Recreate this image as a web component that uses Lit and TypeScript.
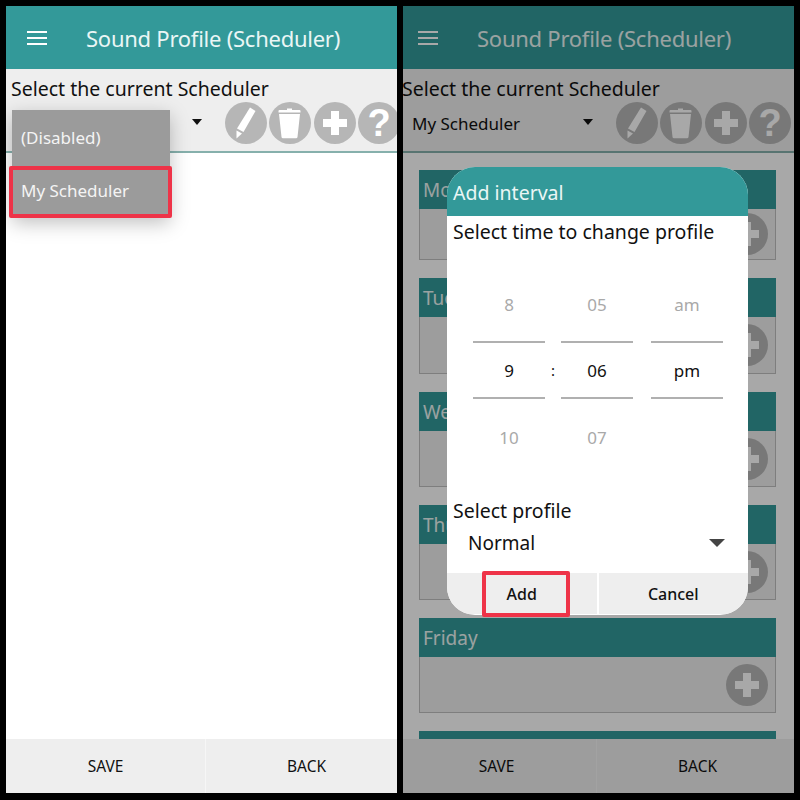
import { LitElement, html, css, svg } from "lit";
import { customElement } from "lit/decorators.js";

const pencil = svg`<path d="M25 5.5 L30.5 9 L18.5 30 L12 26.5Z" fill="#fff"/><path d="M11.5 28.5 L17 31.5 L11.5 36.5Z" fill="#fff"/>`;
const trash = svg`<path d="M18 6.5h5v1.6h7.5a1 1 0 0 1 1 1v1.4H9.5V9.100a1 1 0 0 1 1-1H18Z" fill="#fff"/><path d="M10 12h21l-2.500 23a1.500 1.500 0 0 1-1.500 1.300H14a1.500 1.500 0 0 1-1.500-1.300Z" fill="#fff"/>`;
const plus = svg`<path d="M17 9h8v8h8v8h-8v8h-8v-8H9v-8h8Z" fill="#fff"/>`;

const icon = (p: unknown) =>
  html`<span class="round"><svg width="42" height="42" viewBox="0 0 42 42">${p}</svg></span>`;

@customElement("app-root")
export class AppRoot extends LitElement {
  static styles = css`
    :host {
      display: flex;
      gap: 6px;
      padding: 6px;
      width: 800px;
      height: 800px;
      box-sizing: border-box;
      background: #000;
      font-family: "Noto Sans", sans-serif;
      color: #111;
    }
    .phone {
      width: 391px;
      height: 787px;
      overflow: hidden;
      position: relative;
      flex: none;
    }
    .screen {
      width: 397px;
      height: 787px;
      display: flex;
      flex-direction: column;
      background: #fff;
      position: relative;
    }
    .shift {
      margin-left: -6px;
    }
    .appbar {
      height: 63px;
      flex: none;
      background: #339999;
      color: #eaf6f5;
      display: flex;
      align-items: center;
      gap: 39px;
      padding-left: 21px;
      font-size: 22px;
      letter-spacing: -0.25px;
    }
    .burger {
      display: flex;
      flex-direction: column;
      gap: 4px;
      width: 20px;
    }
    .burger i {
      display: block;
      height: 2px;
      background: #fff;
    }
    .sub {
      height: 84px;
      flex: none;
      box-sizing: border-box;
      background: #eee;
      border-bottom: 2px solid #86b0ac;
      padding: 6px 0 0 5px;
    }
    .label {
      font-size: 19.500px;
      line-height: 27px;
    }
    .tools {
      display: flex;
      align-items: center;
      margin-left: -5px;
      height: 42px;
    }
    .spin {
      width: 219px;
      flex: none;
      box-sizing: border-box;
      padding-left: 15px;
      font-size: 17px;
      display: flex;
      align-items: center;
      justify-content: space-between;
    }
    .caret {
      width: 0;
      height: 0;
      border: 5.500px solid transparent;
      border-top: 6px solid #111;
      border-bottom: 0;
      margin-right: 23px;
      margin-top: -2px;
    }
    .icons {
      display: flex;
      gap: 2.340px;
    }
    .round {
      width: 42px;
      height: 42px;
      border-radius: 50%;
      background: #b6b6b6;
      display: block;
      flex: none;
      position: relative;
      text-align: center;
    }
    .round svg {
      display: block;
    }
    .q {
      color: #fff;
      font: bold 38px/42px "Liberation Sans", sans-serif;
    }
    .main {
      flex: 1;
      min-height: 0;
      overflow: hidden;
      display: flex;
      flex-direction: column;
      gap: 18px;
      padding: 17px 18px 0 22px;
    }
    .card {
      flex: none;
      height: 95px;
      box-sizing: border-box;
      border: 1px solid #c0c0c0;
      background: #eee;
      display: flex;
      flex-direction: column;
    }
    .card:nth-child(1) {
      height: 90px;
    }
    .card:nth-child(2) {
      height: 96px;
    }
    .card-head {
      height: 39px;
      flex: none;
      margin: -1px -1px 0;
      background: #339999;
      color: #eaf6f5;
      font-size: 19px;
      line-height: 40px;
      padding-left: 4px;
    }
    .card-body {
      flex: 1;
      display: flex;
      justify-content: flex-end;
      align-items: center;
      padding-right: 7px;
    }
    .foot {
      height: 54px;
      flex: none;
      display: flex;
      gap: 1px;
      background: #f6f6f6;
      position: relative;
    }
    .foot span {
      flex: 1;
      background: #eee;
      display: flex;
      align-items: center;
      justify-content: center;
      font-size: 15.500px;
    }
    .foot span:first-child {
      flex: none;
      width: 199px;
    }
    .foot span:last-child {
      padding-left: 4px;
    }
    .scrim {
      position: absolute;
      inset: 0;
      background: rgba(0, 0, 0, 0.34);
    }
    .menu {
      position: absolute;
      left: 6px;
      top: 104px;
      width: 158px;
      background: #9b9b9b;
      color: #f4f4f4;
      font-size: 17px;
      box-shadow: 0 6px 18px rgba(0, 0, 0, 0.25);
    }
    .menu div {
      height: 55px;
      box-sizing: border-box;
      padding: 14px 0 0 9px;
      line-height: 28px;
    }
    .menu div + div {
      height: 52px;
      padding-top: 12px;
    }
    .mark {
      position: absolute;
      box-sizing: border-box;
      border: 4px solid #ee3348;
      border-radius: 2px;
    }
    .mark.one {
      left: 3px;
      top: 160px;
      width: 163px;
      height: 52px;
    }
    .mark.two {
      left: 85px;
      top: 565px;
      width: 88px;
      height: 46px;
    }
    .dialog {
      position: absolute;
      left: 50px;
      top: 161px;
      width: 301px;
      height: 448px;
      border-radius: 28px;
      background: #fff;
      overflow: hidden;
      display: flex;
      flex-direction: column;
    }
    .dlg-head {
      height: 49px;
      flex: none;
      background: #339999;
      color: #eaf6f5;
      font-size: 19.500px;
      line-height: 51px;
      padding-left: 6px;
    }
    .dlg-label {
      font-size: 19.500px;
      line-height: 27px;
      padding-left: 6px;
      flex: none;
    }
    .dlg-label.first {
      padding-top: 2px;
    }
    .picker {
      flex: 1;
      display: grid;
      grid-template-columns: 88px 90px 72px;
      padding: 24px 0 0 26px;
      align-content: start;
      font-size: 17px;
    }
    .cell {
      width: 72px;
      display: flex;
      align-items: center;
      justify-content: center;
      color: #a9a9a9;
    }
    .top {
      height: 72px;
      padding-bottom: 2px;
      box-sizing: border-box;
    }
    .now {
      height: 58px;
      box-sizing: border-box;
      color: #111;
      border-top: 2px solid #b0b0b0;
      border-bottom: 2px solid #b0b0b0;
      position: relative;
    }
    .low {
      height: 76px;
    }
    .colon {
      position: absolute;
      left: -10px;
      top: 17px;
      line-height: 20px;
      font-size: 15px;
    }
    .dlg-select {
      flex: none;
      height: 37px;
      margin-bottom: 12px;
      display: flex;
      align-items: center;
      justify-content: space-between;
      padding: 0 23px 0 21px;
      font-size: 19px;
    }
    .dlg-select .caret {
      border-width: 8px;
      border-top-color: #444;
      border-bottom: 0;
      margin: 0;
    }
    .dlg-btns {
      height: 41px;
      flex: none;
      display: flex;
      gap: 2px;
      margin-bottom: 1px;
    }
    .dlg-btns span {
      flex: 1;
      background: #eee;
      display: flex;
      align-items: center;
      justify-content: center;
      font-size: 16px;
      font-weight: 500;
    }
  `;

  private top() {
    return html`
      <div class="appbar">
        <span class="burger"><i></i><i></i><i></i></span>
        <span>Sound Profile (Scheduler)</span>
      </div>
      <div class="sub">
        <div class="label">Select the current Scheduler</div>
        <div class="tools">
          <div class="spin"><span>My Scheduler</span><span class="caret"></span></div>
          <div class="icons">
            ${icon(pencil)}${icon(trash)}${icon(plus)}
            <span class="round q">?</span>
          </div>
        </div>
      </div>
    `;
  }

  private foot() {
    return html`<div class="foot"><span>SAVE</span><span>BACK</span></div>`;
  }

  render() {
    const days = ["Monday", "Tuesday", "Wednesday", "Thursday", "Friday", ""];
    return html`
      <div class="phone">
        <div class="screen">
          ${this.top()}
          <div class="main"></div>
          ${this.foot()}
          <div class="menu"><div>(Disabled)</div><div>My Scheduler</div></div>
          <div class="mark one"></div>
        </div>
      </div>
      <div class="phone">
        <div class="screen shift">
          ${this.top()}
          <div class="main">
            ${days.map(
              (d) => html`<div class="card">
                <div class="card-head">${d}</div>
                <div class="card-body">${icon(plus)}</div>
              </div>`
            )}
          </div>
          ${this.foot()}
          <div class="scrim"></div>
          <div class="dialog">
            <div class="dlg-head">Add interval</div>
            <div class="dlg-label first">Select time to change profile</div>
            <div class="picker">
              <div class="cell top">8</div>
              <div class="cell top">05</div>
              <div class="cell top">am</div>
              <div class="cell now">9</div>
              <div class="cell now"><span class="colon">:</span>06</div>
              <div class="cell now">pm</div>
              <div class="cell low">10</div>
              <div class="cell low">07</div>
              <div class="cell low"></div>
            </div>
            <div class="dlg-label">Select profile</div>
            <div class="dlg-select"><span>Normal</span><span class="caret"></span></div>
            <div class="dlg-btns"><span>Add</span><span>Cancel</span></div>
          </div>
          <div class="mark two"></div>
        </div>
      </div>
    `;
  }
}
